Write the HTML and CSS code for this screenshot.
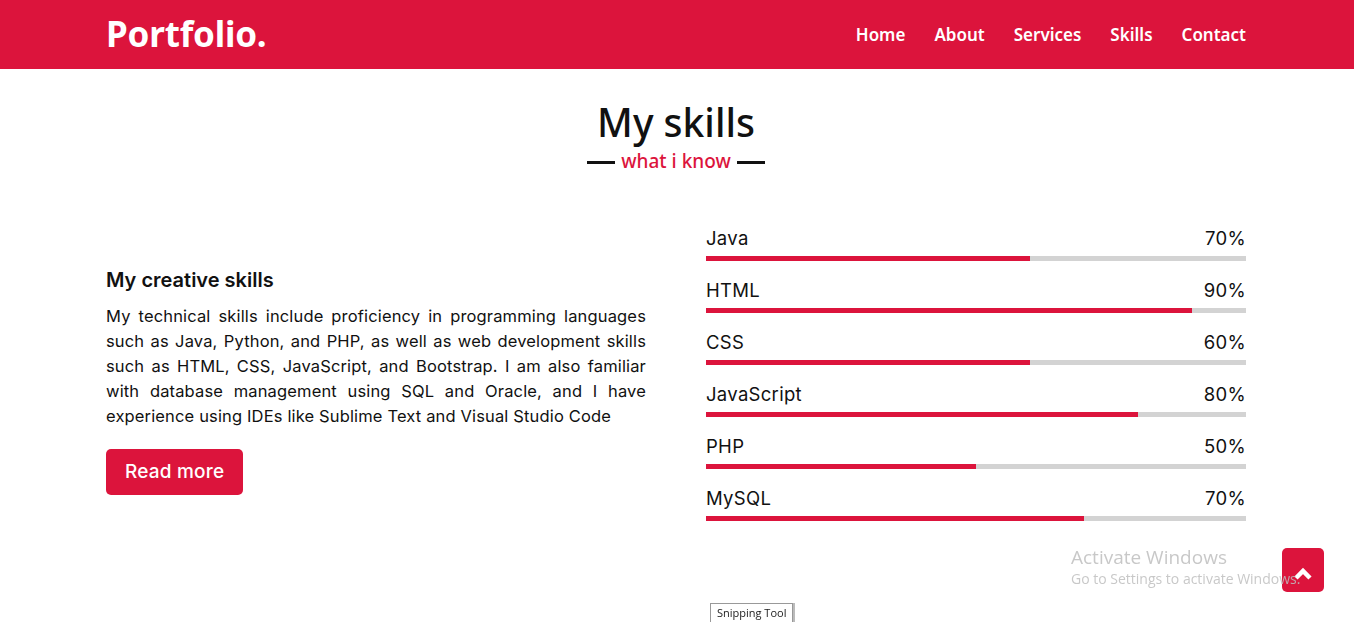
FILE: index.html
```html
<!DOCTYPE html>
<html lang="en">
<head>
<meta charset="utf-8">
<title>Portfolio</title>
<link rel="stylesheet" href="styles.css">
</head>
<body>
<nav class="navbar">
  <div class="container nav-inner">
    <a class="logo" href="#">Portfolio.</a>
    <ul class="menu">
      <li><a href="#">Home</a></li>
      <li><a href="#">About</a></li>
      <li><a href="#">Services</a></li>
      <li><a href="#">Skills</a></li>
      <li><a href="#">Contact</a></li>
    </ul>
  </div>
</nav>

<section class="skills">
  <div class="container">
    <h2 class="title">My skills</h2>
    <div class="subtitle"><span class="line"></span><span class="sub-text">what i know</span><span class="line"></span></div>
    <div class="skills-content">
      <div class="column left">
        <div class="text">My creative skills</div>
        <p>My technical skills include proficiency in programming languages such as Java, Python, and PHP, as well as web development skills such as HTML, CSS, JavaScript, and Bootstrap. I am also familiar with database management using SQL and Oracle, and I have experience using IDEs like Sublime Text and Visual Studio Code</p>
        <a class="btn" href="#">Read more</a>
      </div>
      <div class="column right">
        <div class="bars">
          <div class="info"><span>Java</span><span>70%</span></div>
          <div class="line-bar"><div class="fill" style="width:60%"></div></div>
        </div>
        <div class="bars">
          <div class="info"><span>HTML</span><span>90%</span></div>
          <div class="line-bar"><div class="fill" style="width:90%"></div></div>
        </div>
        <div class="bars">
          <div class="info"><span>CSS</span><span>60%</span></div>
          <div class="line-bar"><div class="fill" style="width:60%"></div></div>
        </div>
        <div class="bars">
          <div class="info"><span>JavaScript</span><span>80%</span></div>
          <div class="line-bar"><div class="fill" style="width:80%"></div></div>
        </div>
        <div class="bars">
          <div class="info"><span>PHP</span><span>50%</span></div>
          <div class="line-bar"><div class="fill" style="width:50%"></div></div>
        </div>
        <div class="bars">
          <div class="info"><span>MySQL</span><span>70%</span></div>
          <div class="line-bar"><div class="fill" style="width:70%"></div></div>
        </div>
      </div>
    </div>
  </div>
</section>

<a class="scroll-up" href="#"><svg width="20" height="14" viewBox="0 0 20 14"><path d="M3 12 L10 5 L17 12" fill="none" stroke="#fff" stroke-width="4.5" stroke-linecap="butt" stroke-linejoin="miter"/></svg></a>

<div class="watermark">
  <div class="wm-title">Activate Windows</div>
  <div class="wm-sub">Go to Settings to activate Windows.</div>
</div>

<div class="snip">Snipping Tool</div>
</body>
</html>
```

FILE: styles.css
```css
* { margin: 0; padding: 0; box-sizing: border-box; }
html, body { height: 100%; }
body {
  font-family: "Inter", "Open Sans", sans-serif;
  color: #111;
  background: #fff;
  overflow: hidden;
}
a { text-decoration: none; }
ul { list-style: none; }

.container {
  max-width: 1142px;
  padding-right: 2px;
  margin: 0 auto;
}

.navbar {
  background: #dc143c;
  height: 69px;
}
.nav-inner {
  height: 69px;
  display: flex;
  align-items: center;
  justify-content: space-between;
}
.logo {
  font-family: "Noto Sans", "Open Sans", sans-serif;
  font-size: 35px;
  font-weight: 700;
  color: #fff;
  letter-spacing: -0.2px;
  margin-top: -2px;
}
.menu {
  display: flex;
  gap: 29px;
}
.menu a {
  font-family: "Noto Sans", "Open Sans", sans-serif;
  font-size: 17px;
  font-weight: 600;
  color: #fff;
}

.skills {
  padding-top: 28px;
}
.title {
  font-family: "Noto Sans", "Open Sans", sans-serif;
  text-align: center;
  font-size: 39px;
  font-weight: 500;
  line-height: 50px;
  color: #111;
}
.subtitle {
  display: flex;
  justify-content: center;
  align-items: center;
  gap: 6px;
  margin-top: 1px;
}
.subtitle .line {
  width: 28px;
  height: 3px;
  background: #111;
  margin-top: 2px;
}
.sub-text {
  font-family: "Noto Sans", "Open Sans", sans-serif;
  color: #dc143c;
  font-size: 19px;
  font-weight: 500;
  line-height: 26px;
}

.skills-content {
  display: flex;
  justify-content: space-between;
  align-items: center;
  margin-top: 52px;
  gap: 60px;
}
.column { width: 540px; }
.left { padding-top: 14px; }
.left .text {
  font-size: 20px;
  font-weight: 600;
  line-height: 28px;
  margin-bottom: 10px;
}
.left p {
  font-size: 16.5px;
  line-height: 25px;
  text-align: justify;
  color: #111;
  letter-spacing: 0.15px;
}
.btn {
  display: inline-block;
  margin-top: 20px;
  background: #dc143c;
  color: #fff;
  font-size: 19px;
  font-weight: 500;
  padding: 0 19px;
  height: 46px;
  line-height: 46px;
  border-radius: 5px;
  letter-spacing: 0.2px;
}

.bars { margin-bottom: 17px; }
.bars:last-child { margin-bottom: 0; }
.info {
  display: flex;
  justify-content: space-between;
  font-size: 18.5px;
  font-weight: 400;
  line-height: 25px;
  margin-bottom: 5px;
  letter-spacing: 0.3px;
}
.line-bar {
  height: 5px;
  background: #d3d3d3;
}
.fill {
  height: 100%;
  background: #dc143c;
}

.watermark {
  position: fixed;
  left: 1071px;
  top: 545px;
  font-family: "Open Sans", "Noto Sans", sans-serif;
  color: rgba(190, 190, 190, 0.85);
  pointer-events: none;
  z-index: 5;
}
.wm-title { font-size: 19px; line-height: 24px; }
.wm-sub { font-size: 14px; line-height: 20px; }

.scroll-up {
  position: fixed;
  left: 1282px;
  top: 548px;
  width: 42px;
  height: 44px;
  background: #dc143c;
  border-radius: 5px;
  display: flex;
  align-items: center;
  justify-content: center;
}
.scroll-up svg { margin-top: 6px; }

.snip {
  position: fixed;
  left: 710px;
  top: 603px;
  font-family: "Open Sans", "Noto Sans", sans-serif;
  font-size: 11px;
  line-height: 18px;
  padding: 0 6px;
  background: #fff;
  border: 1px solid #999;
  box-shadow: 2px 0 0 #bbb;
  color: #222;
  height: 20px;
}
```
